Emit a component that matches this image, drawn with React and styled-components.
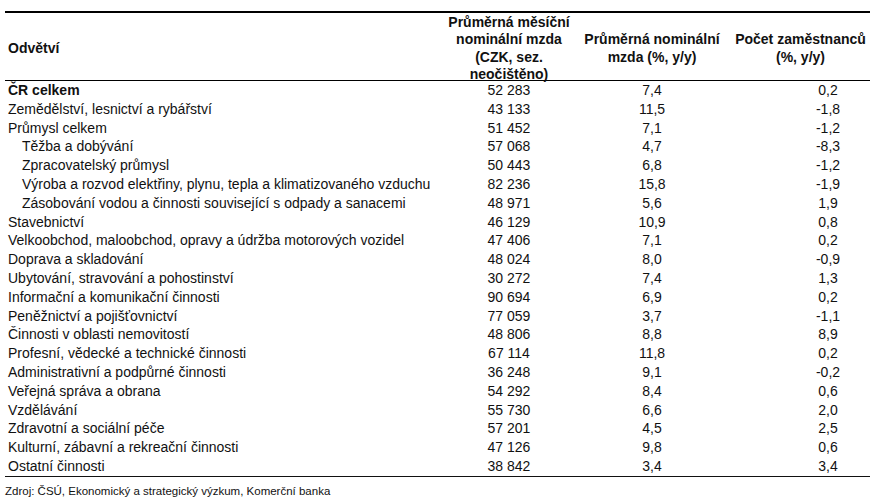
import styled, { createGlobalStyle } from 'styled-components';

const GlobalStyle = createGlobalStyle`
	body {
		margin: 0;
		background: #fff;
		color: #111;
		font-family: "Liberation Sans", Arial, Helvetica, sans-serif;
	}
`;

// column widths shared by header and body rows
const columns = '440px 128px 158px 139px';

const Page = styled.div`
	padding: 11px 8px 0 5px;
`;

const Table = styled.div`
	width: 865px;
	border-top: 2px solid #000;
	border-bottom: 1.5px solid #111;
`;

const HeadRow = styled.div`
	display: grid;
	grid-template-columns: ${columns};
	align-items: center;
	height: 67px;
	border-bottom: 1px solid #000;
	font-size: 14px;
	font-weight: 700;
	line-height: 17.4px;
`;

const HeadCell = styled.div`
	text-align: ${(p) => p.$align || 'center'};
	padding-left: ${(p) => p.$pad || 0}px;
	white-space: nowrap;
	transform: translateY(1px);
`;

const Row = styled.div`
	display: grid;
	grid-template-columns: ${columns};
	align-items: center;
	height: 18.8px;
	font-size: 14px;
	line-height: 18.8px;
`;

const NameCell = styled.div`
	padding-left: ${(p) => (p.$sub ? 17 : 3)}px;
	font-weight: ${(p) => (p.$bold ? 700 : 400)};
	white-space: nowrap;
`;

const NumCell = styled.div`
	text-align: center;
	padding-left: ${(p) => p.$shift || 0}px;
`;

const Source = styled.div`
	margin-top: 7px;
	font-size: 11.5px;
	line-height: 14px;
`;

const rows = [
	['ČR celkem', '52 283', '7,4', '0,2', 'bold'],
	['Zemědělství, lesnictví a rybářství', '43 133', '11,5', '-1,8'],
	['Průmysl celkem', '51 452', '7,1', '-1,2'],
	['Těžba a dobývání', '57 068', '4,7', '-8,3', 'sub'],
	['Zpracovatelský průmysl', '50 443', '6,8', '-1,2', 'sub'],
	['Výroba a rozvod elektřiny, plynu, tepla a klimatizovaného vzduchu', '82 236', '15,8', '-1,9', 'sub'],
	['Zásobování vodou a činnosti související s odpady a sanacemi', '48 971', '5,6', '1,9', 'sub'],
	['Stavebnictví', '46 129', '10,9', '0,8'],
	['Velkoobchod, maloobchod, opravy a údržba motorových vozidel', '47 406', '7,1', '0,2'],
	['Doprava a skladování', '48 024', '8,0', '-0,9'],
	['Ubytování, stravování a pohostinství', '30 272', '7,4', '1,3'],
	['Informační a komunikační činnosti', '90 694', '6,9', '0,2'],
	['Peněžnictví a pojišťovnictví', '77 059', '3,7', '-1,1'],
	['Činnosti v oblasti nemovitostí', '48 806', '8,8', '8,9'],
	['Profesní, vědecké a technické činnosti', '67 114', '11,8', '0,2'],
	['Administrativní a podpůrné činnosti', '36 248', '9,1', '-0,2'],
	['Veřejná správa a obrana', '54 292', '8,4', '0,6'],
	['Vzdělávání', '55 730', '6,6', '2,0'],
	['Zdravotní a sociální péče', '57 201', '4,5', '2,5'],
	['Kulturní, zábavní a rekreační činnosti', '47 126', '9,8', '0,6'],
	['Ostatní činnosti', '38 842', '3,4', '3,4'],
];

export default function App() {
	return (
		<Page>
			<GlobalStyle />
			<Table>
				<HeadRow>
					<HeadCell $align='left' $pad={3}>Odvětví</HeadCell>
					<HeadCell>
						Průměrná měsíční<br />
						nominální mzda<br />
						(CZK, sez.<br />
						neočištěno)
					</HeadCell>
					<HeadCell>
						Průměrná nominální<br />
						mzda (%, y/y)
					</HeadCell>
					<HeadCell>
						Počet zaměstnanců<br />
						(%, y/y)
					</HeadCell>
				</HeadRow>
				{rows.map(([name, wage, wageYoy, staff, kind]) => (
					<Row key={name}>
						<NameCell $bold={kind === 'bold'} $sub={kind === 'sub'}>
							{name}
						</NameCell>
						<NumCell>{wage}</NumCell>
						<NumCell>{wageYoy}</NumCell>
						<NumCell $shift={55}>{staff}</NumCell>
					</Row>
				))}
			</Table>
			<Source>Zdroj: ČSÚ, Ekonomický a strategický výzkum, Komerční banka</Source>
		</Page>
	);
}
